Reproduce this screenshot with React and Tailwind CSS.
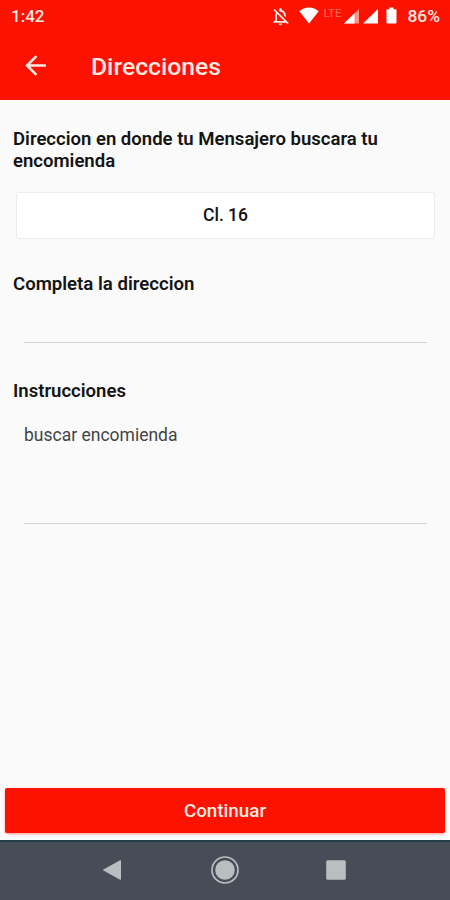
import React, { useState } from "react";
import { MdArrowBack, MdOutlineNotificationsOff } from "react-icons/md";

function StatusBar() {
  return (
    <div className="flex h-[33px] items-center justify-between pl-[11px] pr-[10px] text-[#ffe9e2]">
      <span className="text-[17px] leading-[33px] font-medium">1:42</span>
      <div className="flex items-center">
        <MdOutlineNotificationsOff className="mr-2 mb-px h-[21px] w-[21px]" />
        {/* Wifi */}
        <svg className="mb-[3px] h-[17px] w-5" viewBox="0 0 20 17" fill="#fff">
          <path d="M10 16.5 0.3 4.3C3 1.8 6.3 0.5 10 0.5s7 1.3 9.7 3.8z" />
        </svg>
        <span className="ml-1 mb-2 w-5 text-[11.5px] leading-3 text-[#ff6a55]">LTE</span>
        {/* Mobile signal, one per SIM */}
        <svg className="ml-px h-[15px] w-[15px]" viewBox="0 0 15 15">
          <path d="M15 0v14.5H0z" fill="#ff9484" />
          <path d="M10.5 4.3v10.2H0z" fill="#fff" />
        </svg>
        <svg className="ml-1 h-[15px] w-[15px]" viewBox="0 0 15 15" fill="#fff">
          <path d="M15 0v14.5H0z" />
        </svg>
        <svg className="mr-px mb-[2px] ml-2 h-[17px] w-[11px]" viewBox="0 0 11 17" fill="#fff">
          <path d="M3.5 0.5h4v1.7h2.2c.6 0 .8.3.8.8v12.5c0 .6-.3 1-.8 1H1.3c-.5 0-.8-.4-.8-1V3c0-.5.3-.8.8-.8h2.2z" />
        </svg>
        <span className="ml-[9px] text-[17.4px] leading-[33px] font-medium">86%</span>
      </div>
    </div>
  );
}

function NavigationBar() {
  return (
    <div className="flex h-[60px] justify-center gap-[83px] border-t-2 border-[#243c48] bg-[#474d56] pt-[14px]">
      <svg className="h-7 w-7" viewBox="0 0 28 28">
        <path d="M20.5 4.6v18.8L3.4 14z" fill="#b9bfc1" stroke="#b9bfc1" strokeLinejoin="round" />
      </svg>
      <svg className="h-7 w-7" viewBox="0 0 28 28">
        <circle cx="14" cy="14" r="13" fill="none" stroke="#b9bfc1" strokeWidth="1.7" />
        <circle cx="14" cy="14" r="9.8" fill="#b9bfc1" />
      </svg>
      <svg className="h-7 w-7" viewBox="0 0 28 28">
        <rect x="4.2" y="4.2" width="19.6" height="19.6" rx="1.5" fill="#b9bfc1" />
      </svg>
    </div>
  );
}

export default function App() {
  const [address, setAddress] = useState("");
  const [instructions, setInstructions] = useState("buscar encomienda");

  return (
    <div className="flex h-[900px] w-[450px] flex-col bg-[#fafafa] font-['Roboto',sans-serif] text-[#141414]">
      {/* Header */}
      <header className="h-[100px] bg-[#fb1200]">
        <StatusBar />
        <div className="flex h-[65px] items-center pl-5">
          <MdArrowBack className="h-[31px] w-[31px] text-[#ffe9e2]" />
          <h1 className="ml-10 pt-[3px] text-[24.7px] leading-[62px] font-medium text-[#ffe9e2]">Direcciones</h1>
        </div>
      </header>

      {/* Form */}
      <main className="flex-1 pt-7">
        <h2 className="px-[13px] text-[18.55px] leading-[22px] font-semibold">
          Direccion en donde tu Mensajero buscara tu encomienda
        </h2>
        <button className="mx-4 mt-5 flex h-[47px] w-[419px] items-center justify-center rounded-xs border border-[#ececec] bg-white text-[17.5px] font-medium">
          Cl. 16
        </button>

        <h2 className="mt-[34px] px-[13px] text-[18.6px] leading-[22px] font-semibold">Completa la direccion</h2>
        <input
          value={address}
          onChange={(e) => setAddress(e.target.value)}
          className="mx-6 mt-3 block h-9 w-[403px] border-b border-[#d4d4d4] bg-transparent text-[17.5px] outline-none"
        />

        <h2 className="mt-[37px] px-[13px] text-[18.55px] leading-[22px] font-semibold">Instrucciones</h2>
        <textarea
          value={instructions}
          onChange={(e) => setInstructions(e.target.value)}
          className="mx-6 mt-[22px] block h-[100px] w-[403px] resize-none border-b border-[#d4d4d4] bg-transparent text-[17.5px] leading-[22px] text-[#444] outline-none"
        />
      </main>

      {/* Footer */}
      <div className="bg-[#fdfdfd] px-[5px] pb-[7px]">
        <button className="h-[45px] w-full rounded-xs bg-[#fb1200] pt-px text-[18.8px] font-medium text-[#ffe9e2] shadow-sm shadow-red-300">
          Continuar
        </button>
      </div>
      <NavigationBar />
    </div>
  );
}
